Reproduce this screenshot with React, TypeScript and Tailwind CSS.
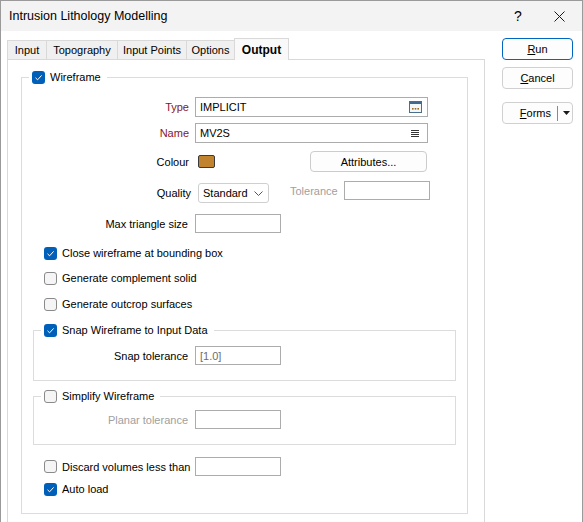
import React from "react";

const font = "font-['Liberation_Sans',sans-serif] text-[11px] leading-[16px] text-black";

// Windows style checkbox
const Check = ({ checked }: { checked?: boolean }) =>
  checked ? (
    <span className="w-[13px] h-[13px] rounded-[3px] bg-[#005fb8] flex items-center justify-center shrink-0">
      <svg width="9" height="9" viewBox="0 0 9 9">
        <path d="M1.5 4.8 L3.6 6.8 L7.6 2.4" fill="none" stroke="white" strokeWidth="1" />
      </svg>
    </span>
  ) : (
    <span className="w-[13px] h-[13px] rounded-[3px] border border-[#8a8a8a] bg-[#f5f5f5] shrink-0" />
  );

const CheckRow = ({ checked, label, className = "" }: { checked?: boolean; label: string; className?: string }) => (
  <div className={`flex items-center h-[16px] pl-[22px] ${className}`}>
    <Check checked={checked} />
    <span className="ml-[5px] whitespace-nowrap">{label}</span>
  </div>
);

const TextBox = ({ w, h = 19, children }: { w: number; h?: number; children?: React.ReactNode }) => (
  <div
    className="border border-[#acacac] bg-white flex items-center pl-[4px] pr-[5px] whitespace-nowrap shrink-0"
    style={{ width: w, height: h }}
  >
    {children}
  </div>
);

const Legend = ({ checked, label }: { checked?: boolean; label: string }) => (
  <legend className="ml-[7px] pl-[3px] pr-[6px]">
    <div className="flex items-center h-[16px]">
      <Check checked={checked} />
      <span className="ml-[5px] whitespace-nowrap">{label}</span>
    </div>
  </legend>
);

const tabs = [
  { name: "Input", w: 39 },
  { name: "Topography", w: 71 },
  { name: "Input Points", w: 69 },
  { name: "Options", w: 48 },
];

export default function App() {
  return (
    <div className={`${font} w-[583px] h-[522px] overflow-hidden bg-white border-l border-r border-t border-[#9a9a9a] flex flex-col`}>
      {/* Title bar */}
      <div className="h-[30px] bg-[#f3f3f3] flex items-center shrink-0">
        <span className="ml-[8px] text-[12.5px]">Intrusion Lithology Modelling</span>
        <span className="ml-auto text-[14px] w-[12px] text-center mr-[30px]">?</span>
        <svg width="11" height="11" viewBox="0 0 11 11" className="mr-[17px]">
          <path d="M0.5 0.5 L10.5 10.5 M10.5 0.5 L0.5 10.5" stroke="#1a1a1a" strokeWidth="1" />
        </svg>
      </div>

      <div className="flex items-start pt-[7px] flex-1">
        {/* Tab control */}
        <div className="ml-[6px] w-[478px] flex flex-col">
          <div className="flex items-end h-[21px]">
            {tabs.map((t) => (
              <div
                key={t.name}
                className="h-[19px] border-t border-l border-[#d9d9d9] bg-[#f0f0f0] flex items-center justify-center whitespace-nowrap"
                style={{ width: t.w }}
              >
                {t.name}
              </div>
            ))}
            <div className="relative z-10 -mb-px h-[22px] w-[55px] border-t border-l border-r border-[#d9d9d9] bg-[#f9f9f9] flex items-center justify-center font-bold text-[12px]">
              Output
            </div>
          </div>

          <div className="h-[470px] border-t border-l border-r border-[#d9d9d9] bg-white pt-[9px]">
            <fieldset className="ml-[13px] w-[447px] border border-[#dcdcdc] pb-[16px]">
              <Legend checked label="Wireframe" />

              <div className="flex items-center mt-[12px]">
                <span className="w-[167px] text-right text-[#85162a]">Type</span>
                <div className="ml-[6px]">
                  <TextBox w={233} h={20}>
                    <span>IMPLICIT</span>
                    <svg width="13" height="12" viewBox="0 0 13 12" className="ml-auto">
                      <rect x="0.5" y="0.5" width="12" height="11" fill="#f4f7fa" stroke="#4a6f8e" />
                      <rect x="1" y="1" width="11" height="2" fill="#3f6a8d" />
                      <rect x="3" y="7" width="1.6" height="1.6" fill="#9a6a1e" />
                      <rect x="5.7" y="7" width="1.6" height="1.6" fill="#9a6a1e" />
                      <rect x="8.4" y="7" width="1.6" height="1.6" fill="#9a6a1e" />
                    </svg>
                  </TextBox>
                </div>
              </div>

              <div className="flex items-center mt-[6px]">
                <span className="w-[167px] text-right text-[#85162a]">Name</span>
                <div className="ml-[6px]">
                  <TextBox w={233} h={20}>
                    <span>MV2S</span>
                    <svg width="8" height="9" viewBox="0 0 8 9" className="ml-auto mr-[3px]">
                      <path d="M0 1.5 H8 M0 3.5 H8 M0 5.5 H8 M0 7.5 H8" stroke="#333" strokeWidth="1" />
                    </svg>
                  </TextBox>
                </div>
              </div>

              <div className="flex items-center mt-[8px] h-[21px]">
                <span className="w-[167px] text-right">Colour</span>
                <span className="ml-[9px] w-[17px] h-[13px] rounded-[2px] border border-[#3a3a3a] bg-[#c2832f]" />
                <button className="ml-[95px] w-[117px] h-[21px] rounded-[4px] border border-[#cccccc] bg-[#fdfdfd] flex items-center justify-center">
                  Attributes...
                </button>
              </div>

              <div className="flex items-start mt-[9px] h-[22px]">
                <span className="w-[169px] text-right mt-[4px]">Quality</span>
                <div className="ml-[7px] mt-[2px] w-[71px] h-[20px] rounded-[3px] border border-[#cfcfcf] bg-white flex items-center pl-[4px]">
                  <span>Standard</span>
                  <svg width="9" height="5" viewBox="0 0 9 5" className="ml-auto mr-[5px]">
                    <path d="M0.5 0.5 L4.5 4.5 L8.5 0.5" fill="none" stroke="#555" strokeWidth="1" />
                  </svg>
                </div>
                <span className="ml-[21px] mt-[2px] text-[#a0a0a0] w-[47px] whitespace-nowrap">Tolerance</span>
                <div className="ml-[7px]">
                  <TextBox w={86} />
                </div>
              </div>

              <div className="flex items-center mt-[11px]">
                <span className="w-[166px] text-right">Max triangle size</span>
                <div className="ml-[7px]">
                  <TextBox w={86} />
                </div>
              </div>

              <CheckRow checked label="Close wireframe at bounding box" className="mt-[12px]" />
              <CheckRow label="Generate complement solid" className="mt-[9px]" />
              <CheckRow label="Generate outcrop surfaces" className="mt-[10px]" />

              <fieldset className="mt-[10px] ml-[11px] w-[423px] border border-[#dcdcdc] pb-[15px]">
                <Legend checked label="Snap Wireframe to Input Data" />
                <div className="flex items-center mt-[8px]">
                  <span className="w-[154px] text-right">Snap tolerance</span>
                  <div className="ml-[7px]">
                    <TextBox w={86}>
                      <span className="text-[#6d6d6d]">[1.0]</span>
                    </TextBox>
                  </div>
                </div>
              </fieldset>

              <fieldset className="mt-[7px] ml-[11px] w-[423px] border border-[#dcdcdc] pb-[15px]">
                <Legend label="Simplify Wireframe" />
                <div className="flex items-center mt-[6px]">
                  <span className="w-[154px] text-right text-[#a0a0a0]">Planar tolerance</span>
                  <div className="ml-[7px]">
                    <TextBox w={86} />
                  </div>
                </div>
              </fieldset>

              <div className="flex items-center mt-[12px] pl-[22px]">
                <Check />
                <span className="ml-[5px] w-[133px] whitespace-nowrap">Discard volumes less than</span>
                <TextBox w={86} />
              </div>

              <CheckRow checked label="Auto load" className="mt-[5px]" />
            </fieldset>
          </div>
        </div>

        {/* Right buttons */}
        <div className="ml-[17px] w-[71px] flex flex-col">
          <button className="h-[22px] rounded-[4px] border border-[#0067c0] bg-[#fdfdfd] flex items-center justify-center">
            <span><span className="underline">R</span>un</span>
          </button>
          <button className="mt-[7px] h-[22px] rounded-[4px] border border-[#d0d0d0] bg-[#fdfdfd] flex items-center justify-center">
            <span><span className="underline">C</span>ancel</span>
          </button>
          <button className="mt-[13px] h-[22px] rounded-[4px] border border-[#d0d0d0] bg-[#fdfdfd] flex items-center">
            <span className="w-[54px] text-right pr-[6px]"><span className="underline">F</span>orms</span>
            <span className="w-px h-[15px] bg-[#8a8a8a]" />
            <svg width="7" height="4" viewBox="0 0 7 4" className="ml-[5px]">
              <path d="M0 0 H7 L3.5 4 Z" fill="#1a1a1a" />
            </svg>
          </button>
        </div>
      </div>
    </div>
  );
}
